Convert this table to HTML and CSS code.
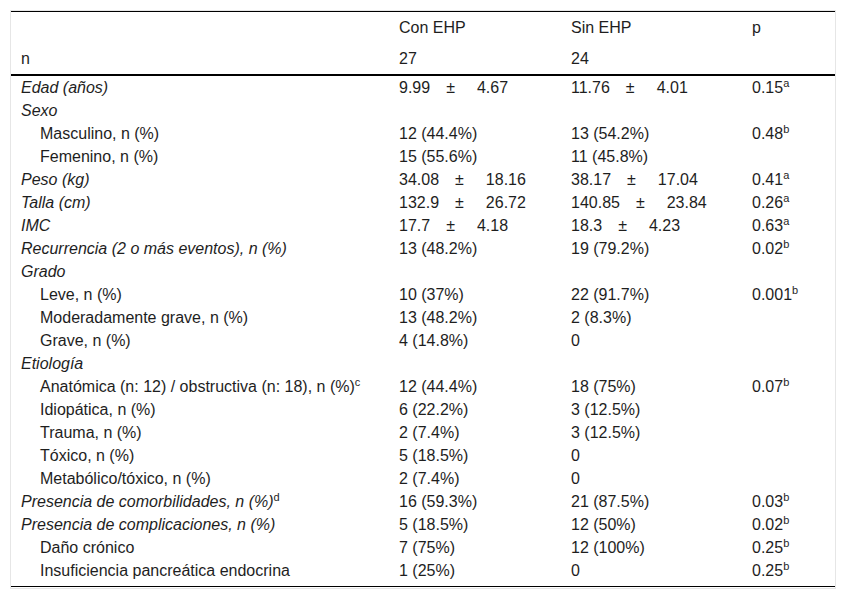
FILE: index.html
```html
<!DOCTYPE html>
<html lang="es">
<head>
<meta charset="utf-8">
<title>Tabla</title>
<link rel="stylesheet" href="styles.css">
</head>
<body>
<div class="frame">
<table class="data">
<colgroup>
<col class="c-label"><col class="c-con"><col class="c-sin"><col class="c-p">
</colgroup>
<thead>
<tr><th></th><th>Con EHP</th><th>Sin EHP</th><th>p</th></tr>
<tr class="last-head"><th>n</th><th>27</th><th>24</th><th></th></tr>
</thead>
<tbody>
<tr><td class="it">Edad (años)</td><td>9.99<span class="pm">±</span>4.67</td><td>11.76<span class="pm">±</span>4.01</td><td>0.15<sup>a</sup></td></tr>
<tr><td class="it">Sexo</td><td></td><td></td><td></td></tr>
<tr><td class="ind">Masculino, n (%)</td><td>12 (44.4%)</td><td>13 (54.2%)</td><td>0.48<sup>b</sup></td></tr>
<tr><td class="ind">Femenino, n (%)</td><td>15 (55.6%)</td><td>11 (45.8%)</td><td></td></tr>
<tr><td class="it">Peso (kg)</td><td>34.08<span class="pm">±</span>18.16</td><td>38.17<span class="pm">±</span>17.04</td><td>0.41<sup>a</sup></td></tr>
<tr><td class="it">Talla (cm)</td><td>132.9<span class="pm">±</span>26.72</td><td>140.85<span class="pm">±</span>23.84</td><td>0.26<sup>a</sup></td></tr>
<tr><td class="it">IMC</td><td>17.7<span class="pm">±</span>4.18</td><td>18.3<span class="pm">±</span>4.23</td><td>0.63<sup>a</sup></td></tr>
<tr><td class="it">Recurrencia (2 o más eventos), n (%)</td><td>13 (48.2%)</td><td>19 (79.2%)</td><td>0.02<sup>b</sup></td></tr>
<tr><td class="it">Grado</td><td></td><td></td><td></td></tr>
<tr><td class="ind">Leve, n (%)</td><td>10 (37%)</td><td>22 (91.7%)</td><td>0.001<sup>b</sup></td></tr>
<tr><td class="ind">Moderadamente grave, n (%)</td><td>13 (48.2%)</td><td>2 (8.3%)</td><td></td></tr>
<tr><td class="ind">Grave, n (%)</td><td>4 (14.8%)</td><td>0</td><td></td></tr>
<tr><td class="it">Etiología</td><td></td><td></td><td></td></tr>
<tr><td class="ind">Anatómica (n: 12) / obstructiva (n: 18), n (%)<sup>c</sup></td><td>12 (44.4%)</td><td>18 (75%)</td><td>0.07<sup>b</sup></td></tr>
<tr><td class="ind">Idiopática, n (%)</td><td>6 (22.2%)</td><td>3 (12.5%)</td><td></td></tr>
<tr><td class="ind">Trauma, n (%)</td><td>2 (7.4%)</td><td>3 (12.5%)</td><td></td></tr>
<tr><td class="ind">Tóxico, n (%)</td><td>5 (18.5%)</td><td>0</td><td></td></tr>
<tr><td class="ind">Metabólico/tóxico, n (%)</td><td>2 (7.4%)</td><td>0</td><td></td></tr>
<tr><td class="it">Presencia de comorbilidades, n (%)<sup>d</sup></td><td>16 (59.3%)</td><td>21 (87.5%)</td><td>0.03<sup>b</sup></td></tr>
<tr><td class="it">Presencia de complicaciones, n (%)</td><td>5 (18.5%)</td><td>12 (50%)</td><td>0.02<sup>b</sup></td></tr>
<tr><td class="ind">Daño crónico</td><td>7 (75%)</td><td>12 (100%)</td><td>0.25<sup>b</sup></td></tr>
<tr class="last-row"><td class="ind">Insuficiencia pancreática endocrina</td><td>1 (25%)</td><td>0</td><td>0.25<sup>b</sup></td></tr>
</tbody>
</table>
</div>
</body>
</html>
```
FILE: styles.css
```css
html, body {
  margin: 0;
  padding: 0;
  background: #ffffff;
}

body {
  font-family: "Liberation Sans", Arial, sans-serif;
  font-size: 16px;
  color: #1e1e1e;
}

.frame {
  margin: 10px;
  width: 824px;
  border: 1px solid #e6e6e6;
  padding: 0 0 1px 0;
}

.data {
  width: 824px;
  border-collapse: collapse;
  table-layout: fixed;
  border-top: 1px solid #000000;
  border-bottom: 1px solid #000000;
}

.c-label { width: 378px; }
.c-con { width: 172px; }
.c-sin { width: 181px; }
.c-p { width: 93px; }

.data th {
  font-weight: normal;
  text-align: left;
  padding: 4px 10px;
  line-height: 23px;
  vertical-align: top;
}

.data thead .last-head th {
  border-bottom: 2px solid #000000;
}

.data td {
  padding: 2px 10px 1px 10px;
  line-height: 20px;
  vertical-align: top;
  white-space: nowrap;
}

.data .last-row td {
  padding-bottom: 5px;
}

.data td.it {
  font-style: italic;
}

.data td.ind {
  padding-left: 29px;
}

.data .pm {
  display: inline-block;
  margin: 0 22px 0 16px;
}

.data sup {
  font-size: 11px;
  font-style: normal;
  line-height: 0;
  vertical-align: 6px;
}
```
